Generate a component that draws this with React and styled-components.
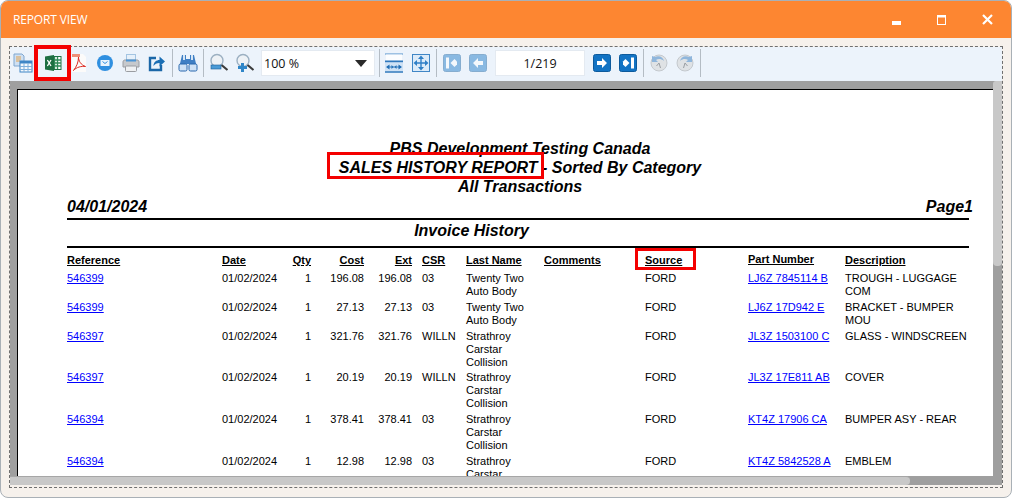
import styled, { createGlobalStyle } from "styled-components";

const GlobalStyle = createGlobalStyle`
  html, body {
    margin: 0;
    padding: 0;
    background: #fff;
  }
  * {
    box-sizing: border-box;
  }
`;

const Window = styled.div`
  width: 1012px;
  height: 498px;
  display: flex;
  flex-direction: column;
  background: #f6f1ec;
  border: 1px solid #a9b0b6;
  border-radius: 8px;
  overflow: hidden;
`;

const TitleBar = styled.div`
  height: 37px;
  flex: none;
  display: flex;
  align-items: center;
  justify-content: space-between;
  padding: 0 18px 0 12px;
  background: #fd8631;
  color: #fff;
  font: 12px "Open Sans", sans-serif;
  letter-spacing: -0.15px;
`;

const WinButtons = styled.div`
  display: flex;
  align-items: center;
  gap: 36px;
`;

const Body = styled.div`
  flex: 1;
  min-height: 0;
  padding: 8px 8px 9px;
  display: flex;
`;

const Frame = styled.div`
  flex: 1;
  min-width: 0;
  display: flex;
  flex-direction: column;
  border: 1px dashed #6f6f6f;
  padding-bottom: 2px;
`;

const Toolbar = styled.div`
  height: 34px;
  flex: none;
  display: flex;
  align-items: center;
  padding-bottom: 2px;
  background: #ecf3fb;
`;

const Tool = styled.div`
  position: relative;
  width: ${(p) => p.$w || 26}px;
  height: 32px;
  flex: none;
  display: flex;
  align-items: center;
  justify-content: center;
`;

const Highlight = styled.div`
  position: absolute;
  left: -6px;
  right: -5px;
  top: -2px;
  bottom: -2px;
  border: 4px solid #f40000;
  z-index: 2;
`;

const Sep = styled.div`
  width: 1px;
  height: 28px;
  flex: none;
  background: #b4bcc4;
  margin: 0 ${(p) => p.$r ?? 2}px 0 ${(p) => p.$l ?? 2}px;
`;

const FieldBox = styled.div`
  height: 26px;
  flex: none;
  width: ${(p) => p.$w}px;
  margin: 0 ${(p) => p.$mr || 0}px 0 ${(p) => p.$ml || 0}px;
  display: flex;
  align-items: center;
  justify-content: ${(p) => (p.$center ? "center" : "space-between")};
  padding: ${(p) => (p.$center ? "0" : "0 7px 0 2px")};
  background: #fff;
  border: 1px solid #e4eaf1;
  color: #111;
  font: 12.5px "Open Sans", sans-serif;
`;

const Caret = styled.span`
  width: 0;
  height: 0;
  border-left: 6.5px solid transparent;
  border-right: 6.5px solid transparent;
  border-top: 7px solid #2a2a2a;
`;

const Viewer = styled.div`
  flex: 1;
  min-height: 0;
  display: grid;
  grid-template-columns: 1fr 9px;
  grid-template-rows: 1fr 9px;
  background: #9f9f9f;
`;

const Pane = styled.div`
  min-width: 0;
  min-height: 0;
  overflow: hidden;
  padding: 8px 0 0 7px;
`;

const Page = styled.div`
  height: 100%;
  overflow: hidden;
  background: #fff;
  border-top: 1px solid #000;
  border-left: 1px solid #000;
  padding: 49px 24px 0 49px;
  color: #000;
  font: 11px "Liberation Sans", Arial, sans-serif;
`;

const VThumb = styled.div`
  width: 9px;
  height: 185px;
  background: #c8c8c8;
  border-radius: 3px 0 4px 4px;
`;

const HThumb = styled.div`
  width: 900px;
  height: 9px;
  background: #c8c8c8;
  border-top: 1px solid #a6a6a6;
  border-radius: 0 4px 4px 0;
`;

const Heading = styled.div`
  padding-left: 4px;
  text-align: center;
  font: italic bold 16px/19px "Liberation Sans", Arial, sans-serif;
`;

const Boxed = styled.span`
  position: relative;
  &::after {
    content: "";
    position: absolute;
    left: ${(p) => p.$l}px;
    right: ${(p) => p.$r}px;
    top: ${(p) => p.$t}px;
    bottom: ${(p) => p.$b}px;
    border: 3px solid #f40000;
  }
`;

const DateRow = styled.div`
  display: flex;
  justify-content: space-between;
  margin: 1px -4px 0 0;
  font: italic bold 16px/19px "Liberation Sans", Arial, sans-serif;
`;

const SectionTitle = styled.div`
  margin-top: 2px;
  padding: 1px 93px 6px 0;
  border-top: 2px solid #000;
  border-bottom: 2px solid #000;
  text-align: center;
  font: italic bold 16px/19px "Liberation Sans", Arial, sans-serif;
`;

const Row = styled.div`
  display: grid;
  grid-template-columns: 155px 60px 29px 53px 48px 54px 78px 101px 103px 97px 124px;
  line-height: 13px;
  padding-bottom: ${(p) => (p.$head ? 5 : 2.75)}px;
  padding-top: ${(p) => (p.$head ? 6 : 0)}px;
`;

const Cell = styled.div`
  text-align: ${(p) => (p.$right ? "right" : "left")};
  padding-left: ${(p) => p.$pad || 0}px;
`;

const HeadCell = styled(Cell)`
  font-weight: bold;
  text-decoration: underline;
`;

const PartHead = styled(HeadCell)`
  margin-top: -1px;
`;

const DocLink = styled.a`
  color: #0000ff;
  text-decoration: underline;
`;

const REPORT_ROWS = [
  ["546399", "196.08", "196.08", "03", "Twenty Two Auto Body", "LJ6Z 7845114 B", "TROUGH - LUGGAGE COM"],
  ["546399", "27.13", "27.13", "03", "Twenty Two Auto Body", "LJ6Z 17D942 E", "BRACKET - BUMPER MOU"],
  ["546397", "321.76", "321.76", "WILLN", "Strathroy Carstar Collision", "JL3Z 1503100 C", "GLASS - WINDSCREEN"],
  ["546397", "20.19", "20.19", "WILLN", "Strathroy Carstar Collision", "JL3Z 17E811 AB", "COVER"],
  ["546394", "378.41", "378.41", "03", "Strathroy Carstar Collision", "KT4Z 17906 CA", "BUMPER ASY - REAR"],
  ["546394", "12.98", "12.98", "03", "Strathroy Carstar Collision", "KT4Z 5842528 A", "EMBLEM"],
];

const CopyIcon = () => (
  <svg width="20" height="20" viewBox="0 0 20 20">
    <path d="M1 1h8l2 2v10H1z" fill="#cfe0f2" stroke="#7fa6cf" />
    <path d="M3 4h5M3 6h5M3 8h4" stroke="#e3a24c" />
    <rect x="7" y="8" width="12" height="11" fill="#f4f8fc" stroke="#3f86c6" />
    <rect x="7" y="8" width="12" height="2.5" fill="#3f86c6" />
    <path d="M11 10v9M15 10v9M7 13.5h12M7 16.5h12" stroke="#7fb0dc" />
  </svg>
);

const ExcelIcon = () => (
  <svg width="18" height="18" viewBox="0 0 18 18">
    <rect x="7" y="2.5" width="10" height="13" fill="#fff" stroke="#1f7246" />
    <path d="M10.5 3v12M13.5 3v12M7 6h10M7 9h10M7 12h10" stroke="#2f8a58" strokeWidth="1.4" />
    <path d="M1 2.5 10 1v16L1 15.5z" fill="#1d6f42" />
    <path d="M3.4 6 7 12M7 6l-3.6 6" stroke="#fff" strokeWidth="1.3" />
  </svg>
);

const PdfIcon = () => (
  <svg width="20" height="20" viewBox="0 0 20 20">
    <path d="M3 1h11l3 3v15H3z" fill="#fcfbfa" />
    <path d="M3 1h8v3H3z" fill="#ee8f78" />
    <path d="M9.500 4c0 4 2.500 8 7 9.500-4-.5-9 .5-12 4 3-4 5-8 5-13.500z" fill="none" stroke="#dc2b22" strokeWidth="1" />
  </svg>
);

const MailIcon = () => (
  <svg width="18" height="18" viewBox="0 0 18 18">
    <circle cx="9" cy="9" r="8" fill="#2f8fe0" />
    <rect x="4.5" y="6" width="9" height="6" rx=".5" fill="#e9f3fc" />
    <path d="M6.5 7.5 9 9.5l2.500-2" fill="none" stroke="#2f8fe0" />
  </svg>
);

const PrintIcon = () => (
  <svg width="20" height="20" viewBox="0 0 20 20">
    <rect x="5.5" y="1.5" width="9" height="7" fill="#e6f0fa" stroke="#a3c4e2" />
    <path d="M2 9c0-1.500 1-2 2-2h12c1 0 2 .5 2 2v5H2z" fill="#c6c9cd" stroke="#9a9da2" />
    <rect x="5" y="6.500" width="10" height="2" fill="#4b95d6" />
    <rect x="4.500" y="13" width="11" height="5.500" rx="1" fill="#eff1f3" stroke="#9a9da2" />
  </svg>
);

const ExportIcon = () => (
  <svg width="18" height="18" viewBox="0 0 18 18">
    <path d="M8 4H2v12h11v-5" fill="none" stroke="#1b67a8" strokeWidth="2.400" />
    <path d="M5.500 12c0-4 3-6 6-6V2.500L17 7.500l-5.500 5V9c-3 0-4.500 1-6 3z" fill="#1b6fb5" />
  </svg>
);

const BinocularsIcon = () => (
  <svg width="20" height="20" viewBox="0 0 20 20">
    <path d="M4 2h4v4h4V2h4l3 13H12v-4H8v4H1z" fill="#3f7fc4" />
    <rect x="1" y="11" width="8" height="7" rx="1.500" fill="#cfe2f6" stroke="#2a69ae" />
    <rect x="11" y="11" width="8" height="7" rx="1.500" fill="#cfe2f6" stroke="#2a69ae" />
    <rect x="5" y="2" width="2" height="5" fill="#d6e6f6" />
    <rect x="13" y="2" width="2" height="5" fill="#d6e6f6" />
  </svg>
);

const ZoomIcon = ({ plus }) => (
  <svg width="20" height="20" viewBox="0 0 20 20">
    <circle cx="8" cy="7.500" r="6" fill="#eef2f6" stroke="#9cb0c2" strokeWidth="1.400" />
    <path d="M12.500 12l6 5" stroke="#3b3b3b" strokeWidth="2.200" />
    {plus ? (
      <path d="M6 10h3v3h3v3H9v3H6v-3H3v-3h3z" fill="#2f86c8" />
    ) : (
      <rect x="2" y="12" width="10" height="4" fill="#4a9ad6" stroke="#1d5f97" strokeWidth=".6" />
    )}
  </svg>
);

const FitWidthIcon = () => (
  <svg width="18" height="20" viewBox="0 0 18 20">
    <path d="M0 1h18" stroke="#4f8fcb" strokeWidth="1.200" />
    <rect x="1" y="1.500" width="16" height="6" fill="#fbfdff" />
    <rect x="0" y="7.500" width="18" height="2" fill="#2f78bd" />
    <rect x="0" y="9.500" width="18" height="9" fill="#cfe2f5" />
    <path d="M2 14h14" stroke="#2f78bd" />
    <path d="M1 14l3.500-2.500v5zM17 14l-3.500-2.500v5zM8.500 14l-2-2v4zM9.500 14l2-2v4z" fill="#1f6db5" />
    <path d="M0 19h18" stroke="#2f78bd" strokeWidth="1.400" />
  </svg>
);

const FitPageIcon = () => (
  <svg width="18" height="18" viewBox="0 0 18 18">
    <rect x=".5" y=".5" width="17" height="17" fill="#dcebf9" stroke="#3f86c6" />
    <path d="M9 1.500 12 5H6zM9 16.500 6 13h6zM1.500 9 5 6v6zM16.500 9 13 12V6z" fill="#2f7fc6" />
    <path d="M9 5v8M5 9h8" stroke="#2f7fc6" strokeWidth="1.400" />
  </svg>
);

const NavIcon = ({ dir, bar, off }) => (
  <svg width="18" height="18" viewBox="0 0 18 18" opacity={off ? 0.45 : 1}>
    <rect x=".5" y=".5" width="17" height="17" rx="2" fill="#1273c4" stroke="#0d5a9c" />
    <g transform={dir === "left" ? "" : "matrix(-1 0 0 1 18 0)"}>
      <path d={bar ? "M7.500 9 11.500 5 14 7.500v3L11.500 13z" : "M4 9 9 4v3h5v4H9v3z"} fill="#fff" />
      {bar && <rect x="3" y="3.500" width="3" height="11" fill="#fff" />}
    </g>
  </svg>
);

const HistoryIcon = ({ flip }) => (
  <svg width="18" height="18" viewBox="0 0 18 18">
    <g transform={flip ? "matrix(-1 0 0 1 18 0)" : ""}>
      <circle cx="9" cy="9" r="8" fill="#dfe2e5" stroke="#c3c8cd" />
      <path d="M9 9l1.500 5M9 9l-2.500 3" stroke="#9a9ea3" />
      <path d="M2 2v6h6L6 6c2-1.500 5-1.500 8 1-1-4-5-6-9-4z" fill="#8fb6dc" />
    </g>
  </svg>
);

const MinimizeIcon = () => (
  <svg width="9" height="4" viewBox="0 0 9 4" style={{ marginTop: 7 }}>
    <rect width="9" height="4" fill="#fff" />
  </svg>
);

const MaximizeIcon = () => (
  <svg width="9" height="10" viewBox="0 0 9 10">
    <rect x=".5" y=".5" width="8" height="9" fill="none" stroke="#fff" />
    <rect width="9" height="2.500" fill="#fff" />
  </svg>
);

const CloseIcon = () => (
  <svg width="11" height="11" viewBox="0 0 11 11">
    <path d="M1 1l9 9M10 1l-9 9" stroke="#fff" strokeWidth="2.200" />
  </svg>
);

export default function App() {
  return (
    <>
      <GlobalStyle />
      <Window>
        <TitleBar>
          REPORT VIEW
          <WinButtons>
            <MinimizeIcon />
            <MaximizeIcon />
            <CloseIcon />
          </WinButtons>
        </TitleBar>
        <Body>
          <Frame>
            <Toolbar>
              <Tool $w={25}><CopyIcon /></Tool>
              <Sep />
              <Tool>
                <ExcelIcon />
                <Highlight />
              </Tool>
              <Tool><PdfIcon /></Tool>
              <Tool><MailIcon /></Tool>
              <Tool><PrintIcon /></Tool>
              <Tool><ExportIcon /></Tool>
              <Sep />
              <Tool><BinocularsIcon /></Tool>
              <Sep />
              <Tool><ZoomIcon /></Tool>
              <Tool><ZoomIcon plus /></Tool>
              <FieldBox $w={114} $ml={3}>
                100 %
                <Caret />
              </FieldBox>
              <Sep $l={4} $r={1} />
              <Tool><FitWidthIcon /></Tool>
              <Tool $w={27}><FitPageIcon /></Tool>
              <Sep />
              <Tool><NavIcon dir="left" bar off /></Tool>
              <Tool><NavIcon dir="left" off /></Tool>
              <FieldBox $w={90} $ml={4} $mr={4} $center>1/219</FieldBox>
              <Tool><NavIcon dir="right" /></Tool>
              <Tool><NavIcon dir="right" bar /></Tool>
              <Sep />
              <Tool><HistoryIcon /></Tool>
              <Tool><HistoryIcon flip /></Tool>
              <Sep />
            </Toolbar>
            <Viewer>
              <Pane>
                <Page>
                  <Heading>
                    <div>PBS Development Testing Canada</div>
                    <div>
                      <Boxed $l={-12} $r={-6} $t={-7} $b={-3}>SALES HISTORY REPORT</Boxed> - Sorted By Category
                    </div>
                    <div>All Transactions</div>
                  </Heading>
                  <DateRow>
                    <span>04/01/2024</span>
                    <span>Page1</span>
                  </DateRow>
                  <SectionTitle>Invoice History</SectionTitle>
                  <Row $head>
                    <HeadCell>Reference</HeadCell>
                    <HeadCell>Date</HeadCell>
                    <HeadCell $right>Qty</HeadCell>
                    <HeadCell $right>Cost</HeadCell>
                    <HeadCell $right>Ext</HeadCell>
                    <HeadCell $pad={10}>CSR</HeadCell>
                    <HeadCell>Last Name</HeadCell>
                    <HeadCell>Comments</HeadCell>
                    <HeadCell>
                      <Boxed $l={-10} $r={-14} $t={-6} $b={-4}>Source</Boxed>
                    </HeadCell>
                    <PartHead>Part Number</PartHead>
                    <HeadCell>Description</HeadCell>
                  </Row>
                  {REPORT_ROWS.map((r, i) => (
                    <Row key={i}>
                      <Cell><DocLink href="#">{r[0]}</DocLink></Cell>
                      <Cell>01/02/2024</Cell>
                      <Cell $right>1</Cell>
                      <Cell $right>{r[1]}</Cell>
                      <Cell $right>{r[2]}</Cell>
                      <Cell $pad={10}>{r[3]}</Cell>
                      <Cell>{r[4]}</Cell>
                      <Cell />
                      <Cell>FORD</Cell>
                      <Cell><DocLink href="#">{r[5]}</DocLink></Cell>
                      <Cell>{r[6]}</Cell>
                    </Row>
                  ))}
                </Page>
              </Pane>
              <VThumb />
              <HThumb />
            </Viewer>
          </Frame>
        </Body>
      </Window>
    </>
  );
}
